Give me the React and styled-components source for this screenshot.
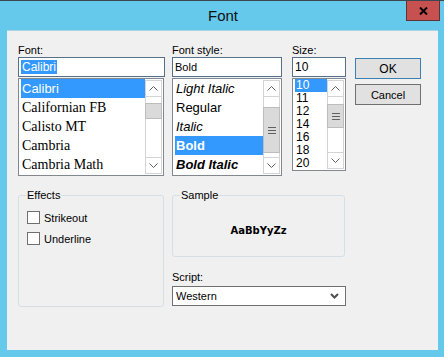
import styled, { createGlobalStyle } from 'styled-components';

const GlobalStyle = createGlobalStyle`
    html, body {
        margin: 0;
        padding: 0;
        background: #ffffff;
    }
    body {
        font-family: "Liberation Sans", Arial, sans-serif;
        font-size: 11px;
        color: #000;
    }
`;

const fonts = [
    { name: 'Calibri', family: '"Liberation Sans", sans-serif', size: 13 },
    { name: 'Californian FB', family: '"Liberation Serif", serif', size: 14 },
    { name: 'Calisto MT', family: '"Liberation Serif", serif', size: 14 },
    { name: 'Cambria', family: '"Liberation Serif", serif', size: 14 },
    { name: 'Cambria Math', family: '"Liberation Serif", serif', size: 14 },
];

const styles = [
    { name: 'Light Italic', italic: true, bold: false },
    { name: 'Regular', italic: false, bold: false },
    { name: 'Italic', italic: true, bold: false },
    { name: 'Bold', italic: false, bold: true },
    { name: 'Bold Italic', italic: true, bold: true },
];

const sizes = ['10', '11', '12', '14', '16', '18', '20'];

const Arrow = ({ down }) => (
    <svg width="9" height="5" viewBox="0 0 9 5">
        <polyline
            points={down ? '0.5,0.5 4.5,4.5 8.5,0.5' : '0.5,4.5 4.5,0.5 8.5,4.5'}
            fill="none"
            stroke="#606060"
            strokeWidth="1"
        />
    </svg>
);

const Grip = () => (
    <svg width="8" height="7" viewBox="0 0 8 7">
        <rect x="0" y="0" width="8" height="1" fill="#606060" />
        <rect x="0" y="3" width="8" height="1" fill="#606060" />
        <rect x="0" y="6" width="8" height="1" fill="#606060" />
    </svg>
);

const Scroll = ({ top, height, grip }) => (
    <ScrollBar>
        <ScrollButton><Arrow /></ScrollButton>
        <Track>
            <Thumb $top={top} $h={height}>{grip && <Grip />}</Thumb>
        </Track>
        <ScrollButton><Arrow down /></ScrollButton>
    </ScrollBar>
);

const App = () => {
    return (
        <>
            <GlobalStyle />
            <Frame>
                <TitleBar>
                    <span />
                    <Title>Font</Title>
                    <CloseRow>
                        <CloseButton>
                            <svg width="9" height="8" viewBox="0 0 9 8">
                                <path d="M1 0.5 L8 7.5 M8 0.5 L1 7.5" stroke="#000" strokeWidth="2" />
                            </svg>
                        </CloseButton>
                    </CloseRow>
                </TitleBar>
                <Client>
                    <TopRow>
                        <Column $w={147} $mr={7}>
                            <Label>Font:</Label>
                            <TextBox $w={147}><Selected>Calibri</Selected></TextBox>
                            <ListBox $w={146} $h={98}>
                                <Items>
                                    {fonts.map((f, i) => (
                                        <Item
                                            key={f.name}
                                            $active={i === 0}
                                            $h={19}
                                            style={{ fontFamily: f.family, fontSize: f.size }}
                                        >
                                            {f.name}
                                        </Item>
                                    ))}
                                </Items>
                                <Scroll top={6} height={16} />
                            </ListBox>
                        </Column>
                        <Column $w={110} $mr={10}>
                            <Label>Font style:</Label>
                            <TextBox $w={110}>Bold</TextBox>
                            <ListBox $w={110} $h={98}>
                                <Items>
                                    {styles.map((s) => (
                                        <StyleItem
                                            key={s.name}
                                            $active={s.name === 'Bold'}
                                            $h={19}
                                            $italic={s.italic}
                                            $bold={s.bold}
                                        >
                                            {s.name}
                                        </StyleItem>
                                    ))}
                                </Items>
                                <Scroll top={10} height={46} grip />
                            </ListBox>
                        </Column>
                        <Column $w={54} $mr={9}>
                            <Label>Size:</Label>
                            <TextBox $w={54} $size={12}>10</TextBox>
                            <ListBox $w={54} $h={93}>
                                <Items>
                                    {sizes.map((s, i) => (
                                        <SizeItem key={s} $active={i === 0} $h={13}>
                                            {s}
                                        </SizeItem>
                                    ))}
                                </Items>
                                <Scroll top={7} height={24} grip />
                            </ListBox>
                        </Column>
                        <ButtonColumn>
                            <Button $default>OK</Button>
                            <Button>Cancel</Button>
                        </ButtonColumn>
                    </TopRow>
                    <BottomRow>
                        <Group $w={146} $h={118}>
                            <Legend>Effects</Legend>
                            <Checks>
                                <CheckRow><Box />Strikeout</CheckRow>
                                <CheckRow><Box />Underline</CheckRow>
                            </Checks>
                        </Group>
                        <RightColumn>
                            <Group $w={173} $h={68}>
                                <Legend>Sample</Legend>
                                <SampleText>AaBbYyZz</SampleText>
                            </Group>
                            <ScriptLabel>Script:</ScriptLabel>
                            <Select>
                                <span>Western</span>
                                <svg width="9" height="6" viewBox="0 0 9 6">
                                    <polyline points="1,1 4.5,4.5 8,1" fill="none" stroke="#505050" strokeWidth="2" />
                                </svg>
                            </Select>
                        </RightColumn>
                    </BottomRow>
                </Client>
            </Frame>
        </>
    );
};

const Frame = styled.div`
    width: 444px;
    height: 357px;
    box-sizing: border-box;
    background: #64c9ea;
    border-top: 1px solid #3c4650;
    display: flex;
    flex-direction: column;
    padding: 0 6px 7px 7px;
`;

const TitleBar = styled.div`
    height: 29px;
    margin: 0 -6px 0 -7px;
    display: grid;
    grid-template-columns: 1fr auto 1fr;
    align-items: start;
`;

const Title = styled.div`
    font-size: 15px;
    line-height: 29px;
    color: #111;
    padding-left: 2px;
`;

const CloseRow = styled.div`
    display: flex;
    justify-content: flex-end;
    padding-right: 4px;
`;

const CloseButton = styled.div`
    width: 34px;
    height: 20px;
    box-sizing: border-box;
    background: #c75050;
    border: 1px solid #5c3434;
    border-top: none;
    display: flex;
    align-items: center;
    justify-content: center;
`;

const Client = styled.div`
    flex: 1;
    background: #f0f0f0;
    border-top: 1px solid #a9d3e3;
    padding: 13px 0 0 11px;
    display: flex;
    flex-direction: column;
`;

const TopRow = styled.div`
    display: flex;
    align-items: flex-start;
`;

const Column = styled.div`
    width: ${(p) => p.$w}px;
    margin-right: ${(p) => p.$mr}px;
    display: flex;
    flex-direction: column;
`;

const Label = styled.div`
    height: 13px;
    line-height: 13px;
`;

const TextBox = styled.div`
    width: ${(p) => p.$w}px;
    height: 20px;
    box-sizing: border-box;
    border: 1px solid #56708c;
    background: #fff;
    padding: 1px 2px 0 2px;
    font-size: ${(p) => p.$size || 11}px;
    line-height: 16px;
    margin-bottom: 1px;
`;

const Selected = styled.span`
    background: #3399ff;
    color: #fff;
    padding: 0 1px;
    font-size: 12px;
`;

const ListBox = styled.div`
    width: ${(p) => p.$w}px;
    height: ${(p) => p.$h}px;
    box-sizing: border-box;
    border: 1px solid #828790;
    background: #fff;
    padding: 0 1px;
    display: flex;
    overflow: hidden;
`;

const Items = styled.div`
    flex: 1;
    display: flex;
    flex-direction: column;
    padding-left: 1px;
    overflow: hidden;
`;

const Item = styled.div`
    height: ${(p) => p.$h}px;
    line-height: ${(p) => p.$h}px;
    flex-shrink: 0;
    padding-left: 1px;
    white-space: nowrap;
    background: ${(p) => (p.$active ? '#3399ff' : 'transparent')};
    color: ${(p) => (p.$active ? '#fff' : '#000')};
`;

const StyleItem = styled(Item)`
    font-size: 13px;
    font-style: ${(p) => (p.$italic ? 'italic' : 'normal')};
    font-weight: ${(p) => (p.$bold ? 'bold' : 'normal')};
`;

const SizeItem = styled(Item)`
    font-size: 12px;
`;

const ScrollBar = styled.div`
    width: 17px;
    flex-shrink: 0;
    display: flex;
    flex-direction: column;
    background: #fff;
    padding: 1px 0;
`;

const ScrollButton = styled.div`
    height: 17px;
    box-sizing: border-box;
    border: 1px solid #d4d4d4;
    display: flex;
    align-items: center;
    justify-content: center;
`;

const Track = styled.div`
    flex: 1;
    border-left: 1px solid #d4d4d4;
    border-right: 1px solid #d4d4d4;
    display: flex;
    flex-direction: column;
`;

const Thumb = styled.div`
    margin: ${(p) => p.$top}px -1px 0 -1px;
    height: ${(p) => p.$h}px;
    box-sizing: border-box;
    background: #dadada;
    border: 1px solid #bdbdbd;
    display: flex;
    align-items: center;
    justify-content: center;
`;

const ButtonColumn = styled.div`
    width: 66px;
    margin-top: 14px;
    display: flex;
    flex-direction: column;
    gap: 5px;
`;

const Button = styled.div`
    height: 21px;
    box-sizing: border-box;
    border: 1px solid ${(p) => (p.$default ? '#3c7fb1' : '#707070')};
    background: #e1e1e1;
    display: flex;
    align-items: center;
    justify-content: center;
    font-size: ${(p) => (p.$default ? 12 : 11)}px;
`;

const BottomRow = styled.div`
    display: flex;
    align-items: flex-start;
    margin-top: 13px;
`;

const Group = styled.fieldset`
    width: ${(p) => p.$w}px;
    height: ${(p) => p.$h}px;
    box-sizing: border-box;
    margin: 0 8px 0 0;
    padding: 0 7px;
    border: 1px solid #d5dfe5;
    border-radius: 3px;
`;

const Legend = styled.legend`
    padding: 0 1px;
    line-height: 13px;
    font-size: 11px;
`;

const Checks = styled.div`
    display: flex;
    flex-direction: column;
    gap: 8px;
    padding: 9px 0 0 1px;
`;

const CheckRow = styled.div`
    display: flex;
    align-items: center;
    gap: 4px;
    height: 13px;
`;

const Box = styled.div`
    width: 13px;
    height: 13px;
    box-sizing: border-box;
    border: 1px solid #707070;
    background: #fff;
`;

const RightColumn = styled.div`
    width: 174px;
    display: flex;
    flex-direction: column;
`;

const SampleText = styled.div`
    margin-top: 22px;
    text-align: center;
    line-height: 13px;
    font-family: "DejaVu Sans", sans-serif;
    font-weight: bold;
    font-size: 10px;
`;

const ScriptLabel = styled.div`
    margin-top: 14px;
    line-height: 13px;
`;

const Select = styled.div`
    margin-top: 2px;
    width: 174px;
    height: 20px;
    box-sizing: border-box;
    border: 1px solid #707070;
    background: #fff;
    display: flex;
    align-items: center;
    justify-content: space-between;
    padding: 0 6px 0 3px;
`;

export default App;
